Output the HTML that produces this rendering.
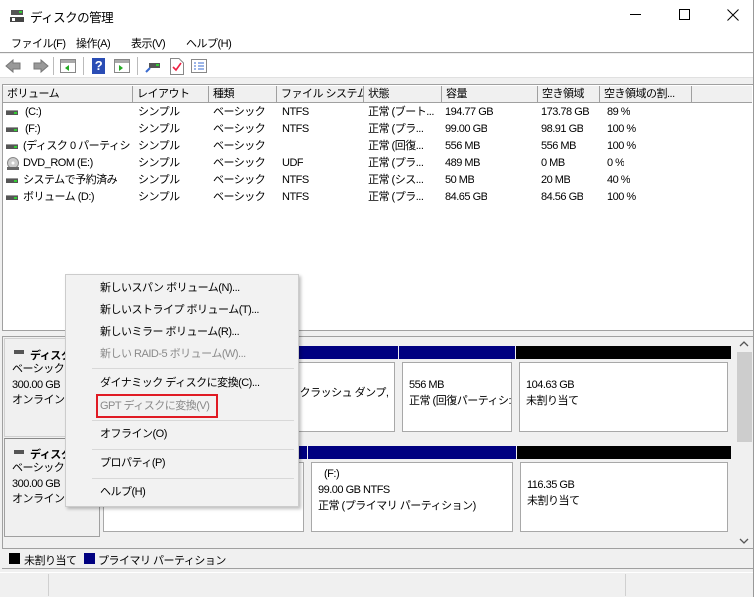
<!DOCTYPE html>
<html><head><meta charset="utf-8"><style>
*{margin:0;padding:0;box-sizing:border-box}
body{width:754px;height:597px;background:#f0f0f0;font-family:"Liberation Sans","Noto Sans CJK JP",sans-serif;font-size:11px;letter-spacing:-0.5px;color:#000;position:relative;overflow:hidden}
.a{position:absolute;white-space:nowrap}
.hd{position:absolute;top:86px;height:17px;background:#f0f0f0;border-right:1px solid #a0a0a0;border-bottom:1px solid #a0a0a0;padding-left:4px;line-height:16px;overflow:hidden;white-space:nowrap}
.row{position:absolute;left:0;width:735px;height:17px;line-height:17px}
.row span{position:absolute;white-space:nowrap;overflow:hidden}
.drv{position:absolute;left:6px;top:6px;width:12px;height:5px;background:#555;border-top:1px solid #999}
.drv:after{content:"";position:absolute;right:1px;top:1px;width:3px;height:2px;background:#3c3}
.mi{position:absolute;left:34px;height:20px;line-height:20px;white-space:nowrap}
.dis{color:#8a8a8a}
.sep{position:absolute;left:26px;right:4px;height:1px;background:#d8d8d8}
.part{position:absolute;background:#f0f0f0}
.part .bar{position:absolute;left:0;right:0;top:0;height:13px}
.part .in{position:absolute;left:3px;right:3px;top:16px;bottom:3px;background:#fff;border:1px solid #a8a8a8;padding:14px 0 0 6px;line-height:16px;white-space:nowrap;overflow:hidden}
</style></head><body>
<div class="a" style="left:0;top:0;width:754px;height:30px;background:#fff"></div>
<svg class="a" style="left:9px;top:8px" width="16" height="16"><rect x="2" y="2" width="12" height="5" fill="#555"/><rect x="10" y="3" width="3" height="2" fill="#3c3"/><rect x="1" y="9" width="14" height="5" fill="#444"/><rect x="3" y="10" width="3" height="3" fill="#fff"/></svg>
<div class="a" style="left:30px;top:7px;font-size:12.5px">ディスクの管理</div>
<div class="a" style="left:630px;top:14px;width:11px;height:1px;background:#000"></div>
<div class="a" style="left:679px;top:9px;width:11px;height:11px;border:1px solid #000"></div>
<svg class="a" style="left:727px;top:9px" width="12" height="12"><path d="M0.5 0.5L11.5 11.5M11.5 0.5L0.5 11.5" stroke="#000"/></svg>
<div class="a" style="left:0;top:30px;width:754px;height:23px;background:#fff;border-bottom:1px solid #a0a0a0"></div>
<div class="a" style="left:11px;top:35px">ファイル(F)</div>
<div class="a" style="left:76px;top:35px">操作(A)</div>
<div class="a" style="left:131px;top:35px">表示(V)</div>
<div class="a" style="left:186px;top:35px">ヘルプ(H)</div>
<div class="a" style="left:0;top:54px;width:754px;height:24px;background:#fff;border-bottom:1px solid #e0e0e0"></div>
<svg class="a" style="left:5px;top:58px" width="44" height="16"><path d="M1 8L8 2V5H15V11H8V14Z" fill="#999" stroke="#777"/><path d="M43 8L36 2V5H29V11H36V14Z" fill="#999" stroke="#777"/></svg>
<div class="a" style="left:53px;top:57px;width:1px;height:18px;background:#bbb"></div>
<svg class="a" style="left:60px;top:59px" width="16" height="14"><rect x="0.5" y="0.5" width="15" height="13" fill="#fff" stroke="#888"/><rect x="1" y="1" width="14" height="3" fill="#aaa"/><path d="M9 6V12L5 9Z" fill="#2a2"/></svg>
<div class="a" style="left:83px;top:57px;width:1px;height:18px;background:#bbb"></div>
<div class="a" style="left:92px;top:58px;width:13px;height:16px;background:#2a4db5;color:#fff;font-weight:bold;font-size:13px;text-align:center;line-height:16px">?</div>
<svg class="a" style="left:114px;top:59px" width="16" height="14"><rect x="0.5" y="0.5" width="15" height="13" fill="#fff" stroke="#888"/><rect x="1" y="1" width="14" height="3" fill="#aaa"/><path d="M5 6V12L9 9Z" fill="#2a2"/></svg>
<div class="a" style="left:137px;top:57px;width:1px;height:18px;background:#bbb"></div>
<svg class="a" style="left:145px;top:60px" width="16" height="14"><rect x="4" y="3" width="11" height="5" fill="#555"/><rect x="11" y="4" width="3" height="2" fill="#3c3"/><path d="M1 12L5 8" stroke="#3a6bd0" stroke-width="2"/></svg>
<svg class="a" style="left:170px;top:58px" width="14" height="17"><path d="M0.5 0.5H9L13.5 5V16.5H0.5Z" fill="#fff" stroke="#888"/><path d="M3 9L6 12L11 5" stroke="#e24" stroke-width="1.6" fill="none"/></svg>
<svg class="a" style="left:191px;top:59px" width="16" height="14"><rect x="0.5" y="0.5" width="15" height="13" fill="#fff" stroke="#888"/><path d="M3 4H5M7 4H13M3 7H5M7 7H13M3 10H5M7 10H13" stroke="#3a6bd0"/></svg>
<div class="a" style="left:2px;top:84px;width:752px;height:247px;background:#fff;border:1px solid #a0a0a0"></div>
<div class="hd" style="left:3px;width:130px">ボリューム</div>
<div class="hd" style="left:133px;width:76px">レイアウト</div>
<div class="hd" style="left:209px;width:68px">種類</div>
<div class="hd" style="left:277px;width:87px">ファイル システム</div>
<div class="hd" style="left:364px;width:78px">状態</div>
<div class="hd" style="left:442px;width:96px">容量</div>
<div class="hd" style="left:538px;width:62px">空き領域</div>
<div class="hd" style="left:600px;width:92px">空き領域の割...</div>
<div class="hd" style="left:692px;width:60px;border-right:none"></div>
<div class="a" style="left:0;top:104px;width:754px">
<div class="row" style="top:0"><i class="drv"></i><span style="left:25px">(C:)</span><span style="left:138px">シンプル</span><span style="left:213px">ベーシック</span><span style="left:282px">NTFS</span><span style="left:368px;width:72px">正常 (ブート...</span><span style="left:445px">194.77 GB</span><span style="left:541px">173.78 GB</span><span style="left:607px">89 %</span></div>
<div class="row" style="top:17px"><i class="drv"></i><span style="left:25px">(F:)</span><span style="left:138px">シンプル</span><span style="left:213px">ベーシック</span><span style="left:282px">NTFS</span><span style="left:368px;width:72px">正常 (プラ...</span><span style="left:445px">99.00 GB</span><span style="left:541px">98.91 GB</span><span style="left:607px">100 %</span></div>
<div class="row" style="top:34px"><i class="drv"></i><span style="left:23px;width:108px">(ディスク 0 パーティシ...</span><span style="left:138px">シンプル</span><span style="left:213px">ベーシック</span><span style="left:368px;width:72px">正常 (回復...</span><span style="left:445px">556 MB</span><span style="left:541px">556 MB</span><span style="left:607px">100 %</span></div>
<div class="row" style="top:51px"><svg style="position:absolute;left:6px;top:2px" width="14" height="14"><circle cx="7" cy="6" r="5.5" fill="#ccc" stroke="#888"/><circle cx="7" cy="6" r="1.5" fill="#fff"/><rect x="1" y="10" width="12" height="3" fill="#666"/></svg><span style="left:23px">DVD_ROM (E:)</span><span style="left:138px">シンプル</span><span style="left:213px">ベーシック</span><span style="left:282px">UDF</span><span style="left:368px;width:72px">正常 (プラ...</span><span style="left:445px">489 MB</span><span style="left:541px">0 MB</span><span style="left:607px">0 %</span></div>
<div class="row" style="top:68px"><i class="drv"></i><span style="left:23px">システムで予約済み</span><span style="left:138px">シンプル</span><span style="left:213px">ベーシック</span><span style="left:282px">NTFS</span><span style="left:368px;width:72px">正常 (シス...</span><span style="left:445px">50 MB</span><span style="left:541px">20 MB</span><span style="left:607px">40 %</span></div>
<div class="row" style="top:85px"><i class="drv"></i><span style="left:23px">ボリューム (D:)</span><span style="left:138px">シンプル</span><span style="left:213px">ベーシック</span><span style="left:282px">NTFS</span><span style="left:368px;width:72px">正常 (プラ...</span><span style="left:445px">84.65 GB</span><span style="left:541px">84.56 GB</span><span style="left:607px">100 %</span></div>
</div>
<div class="a" style="left:2px;top:336px;width:752px;height:213px;background:#f0f0f0;border:1px solid #a0a0a0"></div>
<div class="a" style="left:4px;top:338px;width:96px;height:99px;border:1px solid #d0d0d0;border-right-color:#a0a0a0"></div>
<div class="a" style="left:4px;top:438px;width:96px;height:99px;border:1px solid #a0a0a0;border-top-color:#888"></div>
<div class="a" style="left:14px;top:350px;width:10px;height:4px;background:#555"></div>
<div class="a" style="left:14px;top:450px;width:10px;height:4px;background:#555"></div>
<div class="a" style="left:30px;top:347px;font-weight:bold">ディスク</div>
<div class="a" style="left:12px;top:362px;line-height:15.5px">ベーシック<br>300.00 GB<br>オンライン</div>
<div class="a" style="left:30px;top:446px;font-weight:bold">ディスク</div>
<div class="a" style="left:12px;top:461px;line-height:15.5px">ベーシック<br>300.00 GB<br>オンライン</div>
<div class="part" style="left:100px;top:346px;width:298px;height:89px"><div class="bar" style="background:#000080"></div><div class="in" style="padding-left:180px;padding-top:22px">ル, クラッシュ ダンプ,</div></div>
<div class="part" style="left:399px;top:346px;width:116px;height:89px"><div class="bar" style="background:#000080"></div><div class="in">556 MB<br>正常 (回復パーティシ:</div></div>
<div class="part" style="left:516px;top:346px;width:215px;height:89px"><div class="bar" style="background:#000"></div><div class="in">104.63 GB<br>未割り当て</div></div>
<div class="part" style="left:100px;top:446px;width:207px;height:89px"><div class="bar" style="background:#000080"></div><div class="in"></div></div>
<div class="part" style="left:308px;top:446px;width:208px;height:89px"><div class="bar" style="background:#000080"></div><div class="in" style="padding-top:3px"><span style="padding-left:6px">(F:)</span><br>99.00 GB NTFS<br>正常 (プライマリ パーティション)</div></div>
<div class="part" style="left:517px;top:446px;width:214px;height:89px"><div class="bar" style="background:#000"></div><div class="in">116.35 GB<br>未割り当て</div></div>
<div class="a" style="left:736px;top:337px;width:17px;height:211px;background:#f0f0f0"></div>
<div class="a" style="left:737px;top:352px;width:15px;height:90px;background:#cdcdcd"></div>
<svg class="a" style="left:739px;top:340px" width="10" height="8"><path d="M1 6L5 2L9 6" stroke="#555" fill="none" stroke-width="1.3"/></svg>
<svg class="a" style="left:739px;top:537px" width="10" height="8"><path d="M1 2L5 6L9 2" stroke="#555" fill="none" stroke-width="1.3"/></svg>
<div class="a" style="left:2px;top:549px;width:752px;height:20px;background:#f0f0f0;border-bottom:1px solid #a0a0a0"></div>
<div class="a" style="left:9px;top:553px;width:11px;height:11px;background:#000"></div>
<div class="a" style="left:24px;top:552px">未割り当て</div>
<div class="a" style="left:84px;top:553px;width:11px;height:11px;background:#000080"></div>
<div class="a" style="left:98px;top:552px">プライマリ パーティション</div>
<div class="a" style="left:0;top:572px;width:754px;height:25px;background:#f0f0f0;border-top:1px solid #fff"></div>
<div class="a" style="left:48px;top:574px;width:1px;height:22px;background:#d0d0d0"></div>
<div class="a" style="left:625px;top:574px;width:1px;height:22px;background:#d0d0d0"></div>
<div class="a" style="left:753px;top:0;width:1px;height:597px;background:#999"></div>
<div class="a" style="left:65px;top:274px;width:234px;height:233px;background:#f2f2f2;border:1px solid #ccc;box-shadow:2px 2px 3px rgba(0,0,0,0.25)">
<div class="mi" style="top:3px">新しいスパン ボリューム(N)...</div>
<div class="mi" style="top:25px">新しいストライプ ボリューム(T)...</div>
<div class="mi" style="top:47px">新しいミラー ボリューム(R)...</div>
<div class="mi dis" style="top:69px">新しい RAID-5 ボリューム(W)...</div>
<div class="sep" style="top:93px"></div>
<div class="mi" style="top:98px">ダイナミック ディスクに変換(C)...</div>
<div class="mi dis" style="top:121px">GPT ディスクに変換(V)</div>
<div class="a" style="left:30px;top:119px;width:122px;height:24px;border:2px solid #e01b24"></div>
<div class="sep" style="top:145px"></div>
<div class="mi" style="top:149px">オフライン(O)</div>
<div class="sep" style="top:174px"></div>
<div class="mi" style="top:178px">プロパティ(P)</div>
<div class="sep" style="top:203px"></div>
<div class="mi" style="top:207px">ヘルプ(H)</div>
</div>
</body></html>
